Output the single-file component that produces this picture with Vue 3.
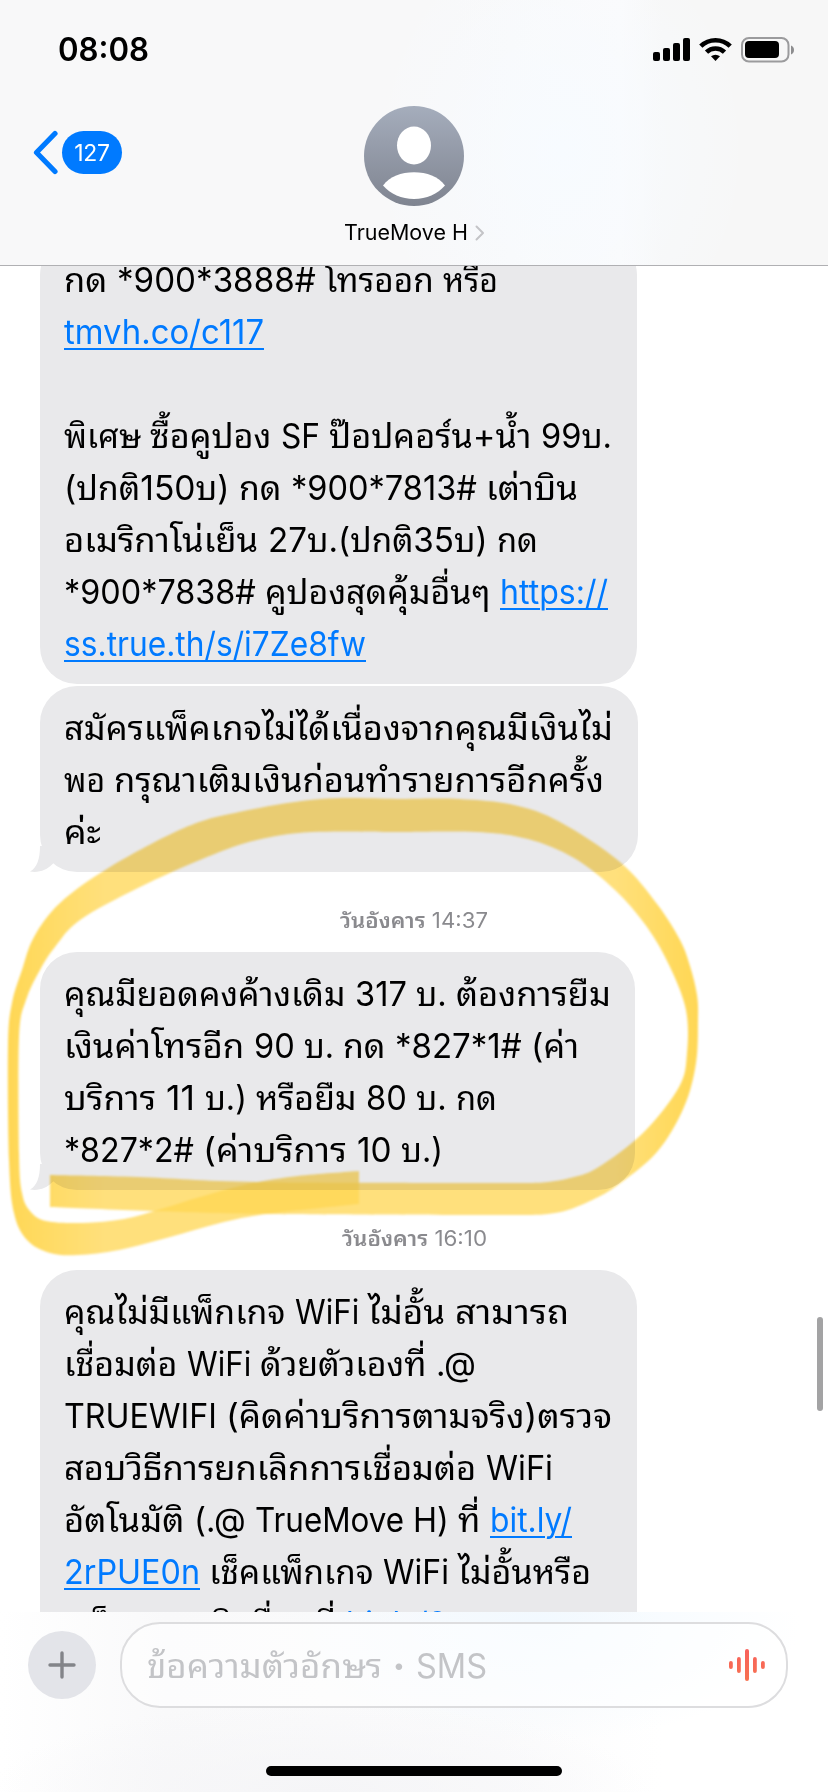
<script setup>
// A line is a list of word runs, each with the width it occupies.
const link = (t, w) => ({ t, w, link: true })
const row = (...parts) => {
  const runs = []
  for (let i = 0; i < parts.length; i++) {
    if (typeof parts[i] === 'string') runs.push({ t: parts[i], w: parts[++i] })
    else runs.push(parts[i])
  }
  return runs
}

const thread = [
  {
    id: 'promo', width: 597, tail: false, cut: true,
    lines: [
      row('กด ', 53, '*900*3888# ', 208, 'โทรออก ', 118, 'หรือ', 55),
      row(link('tmvh.co/c117', 200)),
      row(),
      row('พิเศษ ', 86, 'ซื้อคูปอง ', 131, 'SF ', 48, 'ป๊อปคอร์น+น้ำ ', 212, '99บ.', 71),
      row('(ปกติ150บ) ', 175, 'กด ', 52, '*900*7813# ', 195, 'เต่าบิน', 92),
      row('อเมริกาโน่เย็น ', 204, '27บ.(ปกติ35บ) ', 229, 'กด', 41),
      row('*900*7838# ', 201, 'คูปองสุดคุ้มอื่นๆ ', 235, link('https://', 108)),
      row(link('ss.true.th/s/i7Ze8fw', 302)),
    ],
  },
  {
    id: 'failed', width: 598, tail: true,
    lines: [
      row('สมัครแพ็คเกจไม่ได้เนื่องจากคุณมีเงินไม่', 549),
      row('พอ ', 50, 'กรุณาเติมเงินก่อนทำรายการอีกครั้ง', 490),
      row('ค่ะ', 37),
    ],
  },
  { id: 'd1', date: 'วันอังคาร', time: '14:37', width: 148 },
  {
    id: 'loan', width: 595, tail: true,
    lines: [
      row('คุณมียอดคงค้างเดิม ', 291, '317 ', 61, 'บ. ', 40, 'ต้องการยืม', 155),
      row('เงินค่าโทรอีก ', 190, '90 ', 50, 'บ. ', 39, 'กด ', 52, '*827*1# ', 136, '(ค่า', 48),
      row('บริการ ', 102, '11 ', 39, 'บ.) ', 51, 'หรือยืม ', 110, '80 ', 50, 'บ. ', 40, 'กด', 41),
      row('*827*2# ', 139, '(ค่าบริการ ', 154, '10 ', 44, 'บ.)', 42),
    ],
  },
  { id: 'd2', date: 'วันอังคาร', time: '16:10', width: 145 },
  {
    id: 'wifi', width: 597, tail: false,
    lines: [
      row('คุณไม่มีแพ็กเกจ ', 231, 'WiFi ', 73, 'ไม่อั้น ', 87, 'สามารถ', 114),
      row('เชื่อมต่อ ', 123, 'WiFi ', 73, 'ด้วยตัวเองที่ ', 176, '.@', 40),
      row('TRUEWIFI ', 162, '(คิดค่าบริการตามจริง)ตรวจ', 386),
      row('สอบวิธีการยกเลิกการเชื่อมต่อ ', 422, 'WiFi', 67),
      row('อัตโนมัติ ', 130, '(.@ ', 61, 'TrueMove ', 158, 'H) ', 45, 'ที่ ', 32, link('bit.ly/', 82)),
      row(link('2rPUE0n', 136), ' เช็คแพ็กเกจ ', 183, 'WiFi ', 75, 'ไม่อั้นหรือ', 133),
      row('แพ็กเกจเสริมอื่นๆที่ ', 282, link('bit.ly/2', 101)),
    ],
  },
]

// Squeezes or stretches a run of text so that it fills its measured width.
const fit = (el, target) => {
  el.style.transform = 'none'
  el.style.transform = `scaleX(${target / el.getBoundingClientRect().width})`
}
const vFit = { mounted: (el, { value }) => fit(el, value) }

// Catmull-Rom spline through the points, written as cubic segments.
const spline = (p) => {
  let d = ''
  for (let i = 0; i < p.length - 1; i++) {
    const a = p[Math.max(i - 1, 0)], b = p[i], c = p[i + 1], e = p[Math.min(i + 2, p.length - 1)]
    d += `C${b[0] + (c[0] - a[0]) / 6} ${b[1] + (c[1] - a[1]) / 6} ${c[0] - (e[0] - b[0]) / 6} ${c[1] - (e[1] - b[1]) / 6} ${c[0]} ${c[1]}`
  }
  return d
}
const ribbon = (outer, inner) =>
  `M${outer[0].join(' ')}${spline(outer)}L${inner[0].join(' ')}${spline(inner)}Z`

const leftStroke = ribbon(
  [[400, 799], [321, 799], [239, 812], [184, 828], [110, 867], [60, 903], [34, 937], [22, 970], [12, 1003], [8, 1045], [9, 1160], [14, 1213], [27, 1240], [50, 1253], [78, 1255], [119, 1250], [170, 1237], [220, 1223], [266, 1214], [359, 1204]],
  [[359, 1171], [298, 1176], [248, 1184], [200, 1197], [161, 1209], [124, 1219], [83, 1223], [46, 1221], [30, 1211], [22, 1193], [19, 1153], [19, 1037], [26, 1000], [40, 970], [55, 947], [80, 920], [138, 888], [207, 857], [257, 840], [312, 832], [400, 832]],
)
const rightStroke = ribbon(
  [[400, 799], [459, 799], [514, 805], [560, 822], [620, 862], [657, 904], [680, 940], [690, 966], [697, 995], [698, 1020], [696, 1063], [684, 1107], [657, 1152], [615, 1187], [590, 1201], [568, 1210], [548, 1214], [525, 1215], [480, 1215], [266, 1214], [152, 1211], [50, 1207]],
  [[50, 1175], [138, 1177], [257, 1182], [480, 1183], [525, 1183], [548, 1182], [570, 1178], [597, 1168], [643, 1133], [679, 1087], [687, 1053], [686, 1010], [670, 967], [647, 927], [615, 890], [574, 858], [528, 839], [477, 832], [400, 832]],
)
</script>

<template>
  <div class="screen">
    <header class="top">
      <div class="status">
        <span class="clock"><span v-fit="91" class="run">08:08</span></span>
        <svg class="indicators" width="146" height="30" viewBox="650 34 146 30">
          <rect x="653" y="52" width="7" height="9" rx="2" />
          <rect x="663" y="48" width="7" height="13" rx="2" />
          <rect x="673" y="43" width="7" height="18" rx="2" />
          <rect x="683" y="38" width="7" height="23" rx="2" />
          <g fill="none" stroke="#000" stroke-width="4.6">
            <path d="M700.8 46.2a21 21 0 0 1 29.4 0" />
            <path d="M706.5 52.2a12.8 12.8 0 0 1 18 0" />
          </g>
          <path d="M711 56.3a7 7 0 0 1 9 0l-4.5 4.8z" />
          <rect x="742" y="38" width="46.5" height="23.5" rx="7" fill="none" stroke="#9b9b9d" stroke-width="2" />
          <rect x="745" y="41" width="34" height="17" rx="4" />
          <path d="M791 45.5c4 1.5 4 7.500 0 9z" fill="#8d8d8f" />
        </svg>
      </div>
      <div class="nav">
        <div class="back">
          <svg width="26" height="46" viewBox="0 0 26 46">
            <path d="M22 3.500 3.500 22.500 22 41.500" fill="none" stroke="#007aff" stroke-width="5.200" stroke-linecap="round" stroke-linejoin="round" />
          </svg>
          <span class="unread">127</span>
        </div>
        <div class="contact">
          <svg width="100" height="100" viewBox="0 0 100 100">
            <defs>
              <linearGradient id="face" x1="0" y1="0" x2="0" y2="1">
                <stop offset="0" stop-color="#a5adbc" />
                <stop offset="1" stop-color="#7f8490" />
              </linearGradient>
            </defs>
            <circle cx="50" cy="50" r="50" fill="url(#face)" />
            <ellipse cx="50" cy="39.500" rx="17" ry="19" fill="#fff" />
            <path d="M19 79.500C26 70.500 37 66.300 50 66.300s24 4.200 31 13.200C73.500 88 62.500 93 50 93s-23.500-5-31-13.500z" fill="#fff" />
          </svg>
          <div class="name">
            <span class="name-text"><span v-fit="124" class="run">TrueMove H</span></span>
            <svg width="10" height="16" viewBox="0 0 10 16">
              <path d="M1.500 1.500 8 8l-6.500 6.500" fill="none" stroke="#c4c4c7" stroke-width="2" stroke-linecap="round" stroke-linejoin="round" />
            </svg>
          </div>
        </div>
      </div>
    </header>

    <main class="thread">
      <template v-for="m in thread" :key="m.id">
        <div v-if="m.date" class="stamp">
          <span class="seg" :style="{ width: m.width + 'px' }">
            <span v-fit="m.width" class="run"><b>{{ m.date }}</b> {{ m.time }}</span>
          </span>
        </div>
        <div v-else class="bubble" :class="{ cut: m.cut }" :style="{ width: m.width + 'px' }">
          <div v-for="(line, i) in m.lines" :key="i" class="line">
            <span v-for="(s, k) in line" :key="k" class="seg" :style="{ width: s.w + 'px' }">
              <span v-fit="s.w" class="run" :class="{ link: s.link }">{{ s.t }}</span>
            </span>
          </div>
          <svg v-if="m.tail" class="tail" width="34" height="26" viewBox="0 0 34 26">
            <path d="M10 0C10 13 7 22 0 25.500c9 1.500 17-1.500 22.500-7.500L34 8V0z" fill="#e9e9eb" />
          </svg>
        </div>
      </template>
      <div class="scrollbar"></div>
    </main>

    <footer class="composer">
      <div class="controls">
        <div class="plus">
          <svg width="28" height="28" viewBox="0 0 28 28">
            <path d="M14 2v24M2 14h24" stroke="#838489" stroke-width="3.400" stroke-linecap="round" />
          </svg>
        </div>
        <div class="field">
          <div class="hint">
            <span class="hint-word"><span v-fit="235" class="run">ข้อความตัวอักษร</span></span>
            <span class="dot">•</span>
            <span class="hint-kind"><span v-fit="71" class="run">SMS</span></span>
          </div>
          <svg width="38" height="34" viewBox="0 0 38 34">
            <defs>
              <linearGradient id="wave" gradientUnits="userSpaceOnUse" x1="0" y1="0" x2="0" y2="34">
                <stop offset="0" stop-color="#f8605c" />
                <stop offset="1" stop-color="#f77350" />
              </linearGradient>
            </defs>
            <g fill="url(#wave)">
              <rect x="1" y="13" width="3.800" height="8" rx="1.900" />
              <rect x="9" y="9" width="3.800" height="16" rx="1.900" />
              <rect x="17" y="1" width="4" height="32" rx="2" />
              <rect x="25" y="9" width="3.800" height="16" rx="1.900" />
              <rect x="33" y="13" width="3.800" height="8" rx="1.900" />
            </g>
          </svg>
        </div>
      </div>
      <div class="home"></div>
    </footer>

    <svg class="marker" width="828" height="1792" viewBox="0 0 828 1792">
      <defs>
        <linearGradient id="ink" gradientUnits="userSpaceOnUse" x1="8" y1="0" x2="698" y2="0">
          <stop offset="0" stop-color="#ffd755" />
          <stop offset=".04" stop-color="#ffda60" />
          <stop offset=".14" stop-color="#ffe07c" />
          <stop offset=".88" stop-color="#ffe07c" />
          <stop offset=".96" stop-color="#ffda60" />
          <stop offset="1" stop-color="#ffd755" />
        </linearGradient>
        <clipPath id="crossing"><path :d="rightStroke" /></clipPath>
      </defs>
      <path :d="leftStroke" fill="url(#ink)" />
      <path :d="rightStroke" fill="url(#ink)" />
      <g clip-path="url(#crossing)">
        <path :d="leftStroke" fill="#ffd95c" />
      </g>
    </svg>
  </div>
</template>

<style>
body {
  background: #fff;
  overflow: hidden;
}
</style>

<style scoped>
.screen {
  position: relative;
  display: flex;
  flex-direction: column;
  width: 828px;
  height: 1792px;
  overflow: hidden;
  background: #fff;
  color: #000;
  font-family: Inter, "Noto Sans Thai Looped", Loma, Waree, "Noto Sans Thai", "Noto Sans", "Liberation Sans", sans-serif;
  font-feature-settings: "calt" 0;
}
.run {
  display: inline-block;
  white-space: pre;
  transform-origin: 0 50%;
}
.seg {
  display: inline-block;
  flex: none;
  white-space: nowrap;
}
.top {
  flex: none;
  height: 266px;
  box-sizing: border-box;
  border-bottom: 1px solid #b0b0b3;
  background: radial-gradient(ellipse 190px 230px at 560px 150px, #f7fbff, #f7fbff00), linear-gradient(90deg, #f8f8f9 55%, #fbfbfc 75%, #f7f7f7 80%);
}
.status {
  display: flex;
  justify-content: space-between;
  padding: 30px 32px 0 58px;
  height: 76px;
  box-sizing: border-box;
}
.clock {
  width: 91px;
  font-size: 32px;
  line-height: 39px;
  font-weight: 600;
  font-feature-settings: "calt" 1;
}
.indicators {
  margin-top: 4px;
}
.nav {
  display: grid;
  grid-template-columns: 1fr 200px 1fr;
  padding-top: 30px;
}
.back {
  display: flex;
  align-items: flex-start;
  padding: 24px 0 0 33px;
}
.unread {
  width: 60px;
  height: 43px;
  margin: 1px 0 0 3px;
  border-radius: 22px;
  background: #007aff;
  color: #fff;
  font-size: 23px;
  line-height: 44px;
  text-align: center;
  letter-spacing: -.3px;
}
.contact {
  display: flex;
  flex-direction: column;
  align-items: center;
}
.name {
  display: flex;
  align-items: center;
  gap: 7px;
  margin-top: 14px;
  height: 26px;
}
.name-text {
  width: 124px;
  font-size: 21px;
  line-height: 26px;
}
.thread {
  position: relative;
  flex: none;
  height: 1346px;
  overflow: hidden;
  padding-left: 40px;
}
.bubble {
  position: relative;
  box-sizing: border-box;
  margin-bottom: 2px;
  padding: 16px 0 14px 24px;
  border-radius: 37px;
  background: #e9e9eb;
}
.bubble.cut {
  margin-top: -28px;
}
.line {
  display: flex;
  height: 52px;
  font-size: 33.500px;
  line-height: 52px;
}
.link {
  color: #007aff;
  text-decoration: underline;
  text-decoration-thickness: 2px;
  text-underline-offset: 4px;
}
.tail {
  position: absolute;
  left: -10px;
  bottom: 0;
}
.stamp {
  display: flex;
  justify-content: center;
  margin: -2px 0 0 -40px;
  height: 80px;
  padding-top: 34px;
  box-sizing: border-box;
  color: #8a8a8e;
  font-size: 21px;
  line-height: 30px;
  font-feature-settings: "calt" 1;
}
.stamp b {
  font-weight: 600;
}
.scrollbar {
  position: absolute;
  right: 5px;
  top: 1051px;
  width: 6px;
  height: 94px;
  border-radius: 3px;
  background: #a3a3a4;
}
.composer {
  flex: 1;
  display: flex;
  flex-direction: column;
  justify-content: space-between;
  align-items: center;
  padding: 10px 0 16px;
  background: radial-gradient(ellipse 260px 120px at 540px 10px, #f2f9ff, #f2f9ff00), radial-gradient(ellipse 330px 90px at 320px 180px, #f5f5f7, #f5f5f700), linear-gradient(90deg, #fff, #f9f9fa 20%, #fbfbfc 60%, #fff 80%);
}
.controls {
  display: flex;
  align-items: center;
  gap: 24px;
  width: 760px;
  margin-left: -12px;
}
.plus {
  display: grid;
  place-items: center;
  width: 68px;
  height: 68px;
  border-radius: 50%;
  background: #e3e4e9;
}
.field {
  display: flex;
  flex: 1;
  align-items: center;
  justify-content: space-between;
  box-sizing: border-box;
  height: 86px;
  padding: 0 20px 0 25px;
  border: 2px solid #dddddf;
  border-radius: 40px;
  background: #ffffff80;
}
.hint {
  display: flex;
  align-items: center;
  padding-top: 2px;
  color: #c3c4c7;
  font-size: 33.500px;
  line-height: 52px;
}
.hint-word {
  width: 235px;
}
.dot {
  width: 34px;
  font-size: 21px;
  text-align: center;
}
.hint-kind {
  width: 71px;
}
.home {
  width: 296px;
  height: 10px;
  border-radius: 5px;
  background: #000;
}
.marker {
  position: absolute;
  inset: 0;
  pointer-events: none;
  mix-blend-mode: multiply;
  filter: blur(.8px);
}
</style>
